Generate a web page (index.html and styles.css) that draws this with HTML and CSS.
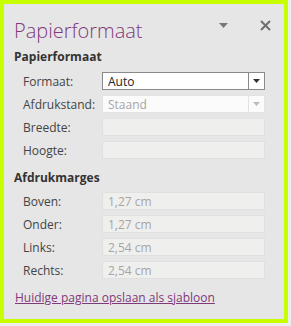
FILE: index.html
```html
<!DOCTYPE html>
<html lang="nl">
<head>
<meta charset="utf-8">
<link rel="stylesheet" href="styles.css">
</head>
<body>
<div class="panel">
  <div class="header">
    <h1 class="title">Papierformaat</h1>
    <div class="tools">
      <svg class="menu" width="10" height="5" viewBox="0 0 10 5"><path d="M0 0H9L4.5 5Z" fill="#777"/></svg>
      <svg class="close" width="11" height="11" viewBox="0 0 11 11"><path d="M1 1L10 10M10 1L1 10" stroke="#6f6f6f" stroke-width="2"/></svg>
    </div>
  </div>
  <h2 class="section">Papierformaat</h2>
  <div class="rows">
    <div class="row"><span class="label">Formaat:</span><div class="field select active"><span>Auto</span><span class="btn"><svg width="7" height="4" viewBox="0 0 7 4"><path d="M0 0H7L3.5 4Z" fill="#333"/></svg></span></div></div>
    <div class="row"><span class="label">Afdrukstand:</span><div class="field select white"><span>Staand</span><span class="btn"><svg width="7" height="4" viewBox="0 0 7 4"><path d="M0 0H7L3.5 4Z" fill="#bbb"/></svg></span></div></div>
    <div class="row"><span class="label">Breedte:</span><div class="field"></div></div>
    <div class="row"><span class="label">Hoogte:</span><div class="field"></div></div>
  </div>
  <h2 class="section second">Afdrukmarges</h2>
  <div class="rows">
    <div class="row"><span class="label">Boven:</span><div class="field"><span>1,27 cm</span></div></div>
    <div class="row"><span class="label">Onder:</span><div class="field"><span>1,27 cm</span></div></div>
    <div class="row"><span class="label">Links:</span><div class="field"><span>2,54 cm</span></div></div>
    <div class="row"><span class="label">Rechts:</span><div class="field"><span>2,54 cm</span></div></div>
  </div>
  <a class="link" href="#">Huidige pagina opslaan als sjabloon</a>
</div>
</body>
</html>
```
FILE: styles.css
```css
html, body {
  margin: 0;
  padding: 0;
  background: #ededed;
}
.panel {
  box-sizing: border-box;
  width: 288px;
  height: 323px;
  border: 4px solid #c8ff00;
  background: #e6e6e6;
  padding: 0 0 0 10px;
  font-family: "Open Sans", "Noto Sans", sans-serif;
  font-size: 12px;
  color: #444;
}
.header {
  display: flex;
  align-items: flex-start;
  justify-content: space-between;
  height: 45px;
  padding-right: 13px;
}
.title {
  margin: 13px 0 0;
  font-weight: 300;
  font-size: 20px;
  line-height: 27px;
  color: #80397b;
}
.tools {
  display: flex;
  align-items: center;
  gap: 31px;
  margin-top: 16px;
}
.section {
  margin: 0;
  font-size: 12px;
  font-weight: 700;
  color: #333;
  line-height: 16px;
  height: 23px;
}
.section.second {
  margin-top: 11px;
  height: 22px;
}
.rows {
  display: flex;
  flex-direction: column;
  gap: 5px;
  padding-left: 9px;
}
.row {
  display: flex;
  align-items: center;
  height: 18px;
}
.label {
  width: 79px;
  color: #444;
}
.field {
  box-sizing: border-box;
  width: 163px;
  height: 18px;
  border: 1px solid #e0e0e0;
  background: #efefee;
  color: #a6a6a6;
  display: flex;
  align-items: center;
  padding-left: 5px;
  font-size: 12px;
}
.field.white {
  background: #fbfbfb;
  border-color: #e3e3e3;
}
.field.active {
  background: #fff;
  border-color: #8a8a8a;
  color: #222;
}
.select {
  justify-content: space-between;
  padding-right: 0;
}
.btn {
  width: 15px;
  height: 100%;
  border-left: 1px solid #8a8a8a;
  display: flex;
  align-items: center;
  justify-content: center;
}
.white .btn {
  border-left-color: #e3e3e3;
}
.link {
  display: inline-block;
  margin-top: 10px;
  margin-left: 1px;
  color: #80397b;
  font-size: 12px;
}
```
